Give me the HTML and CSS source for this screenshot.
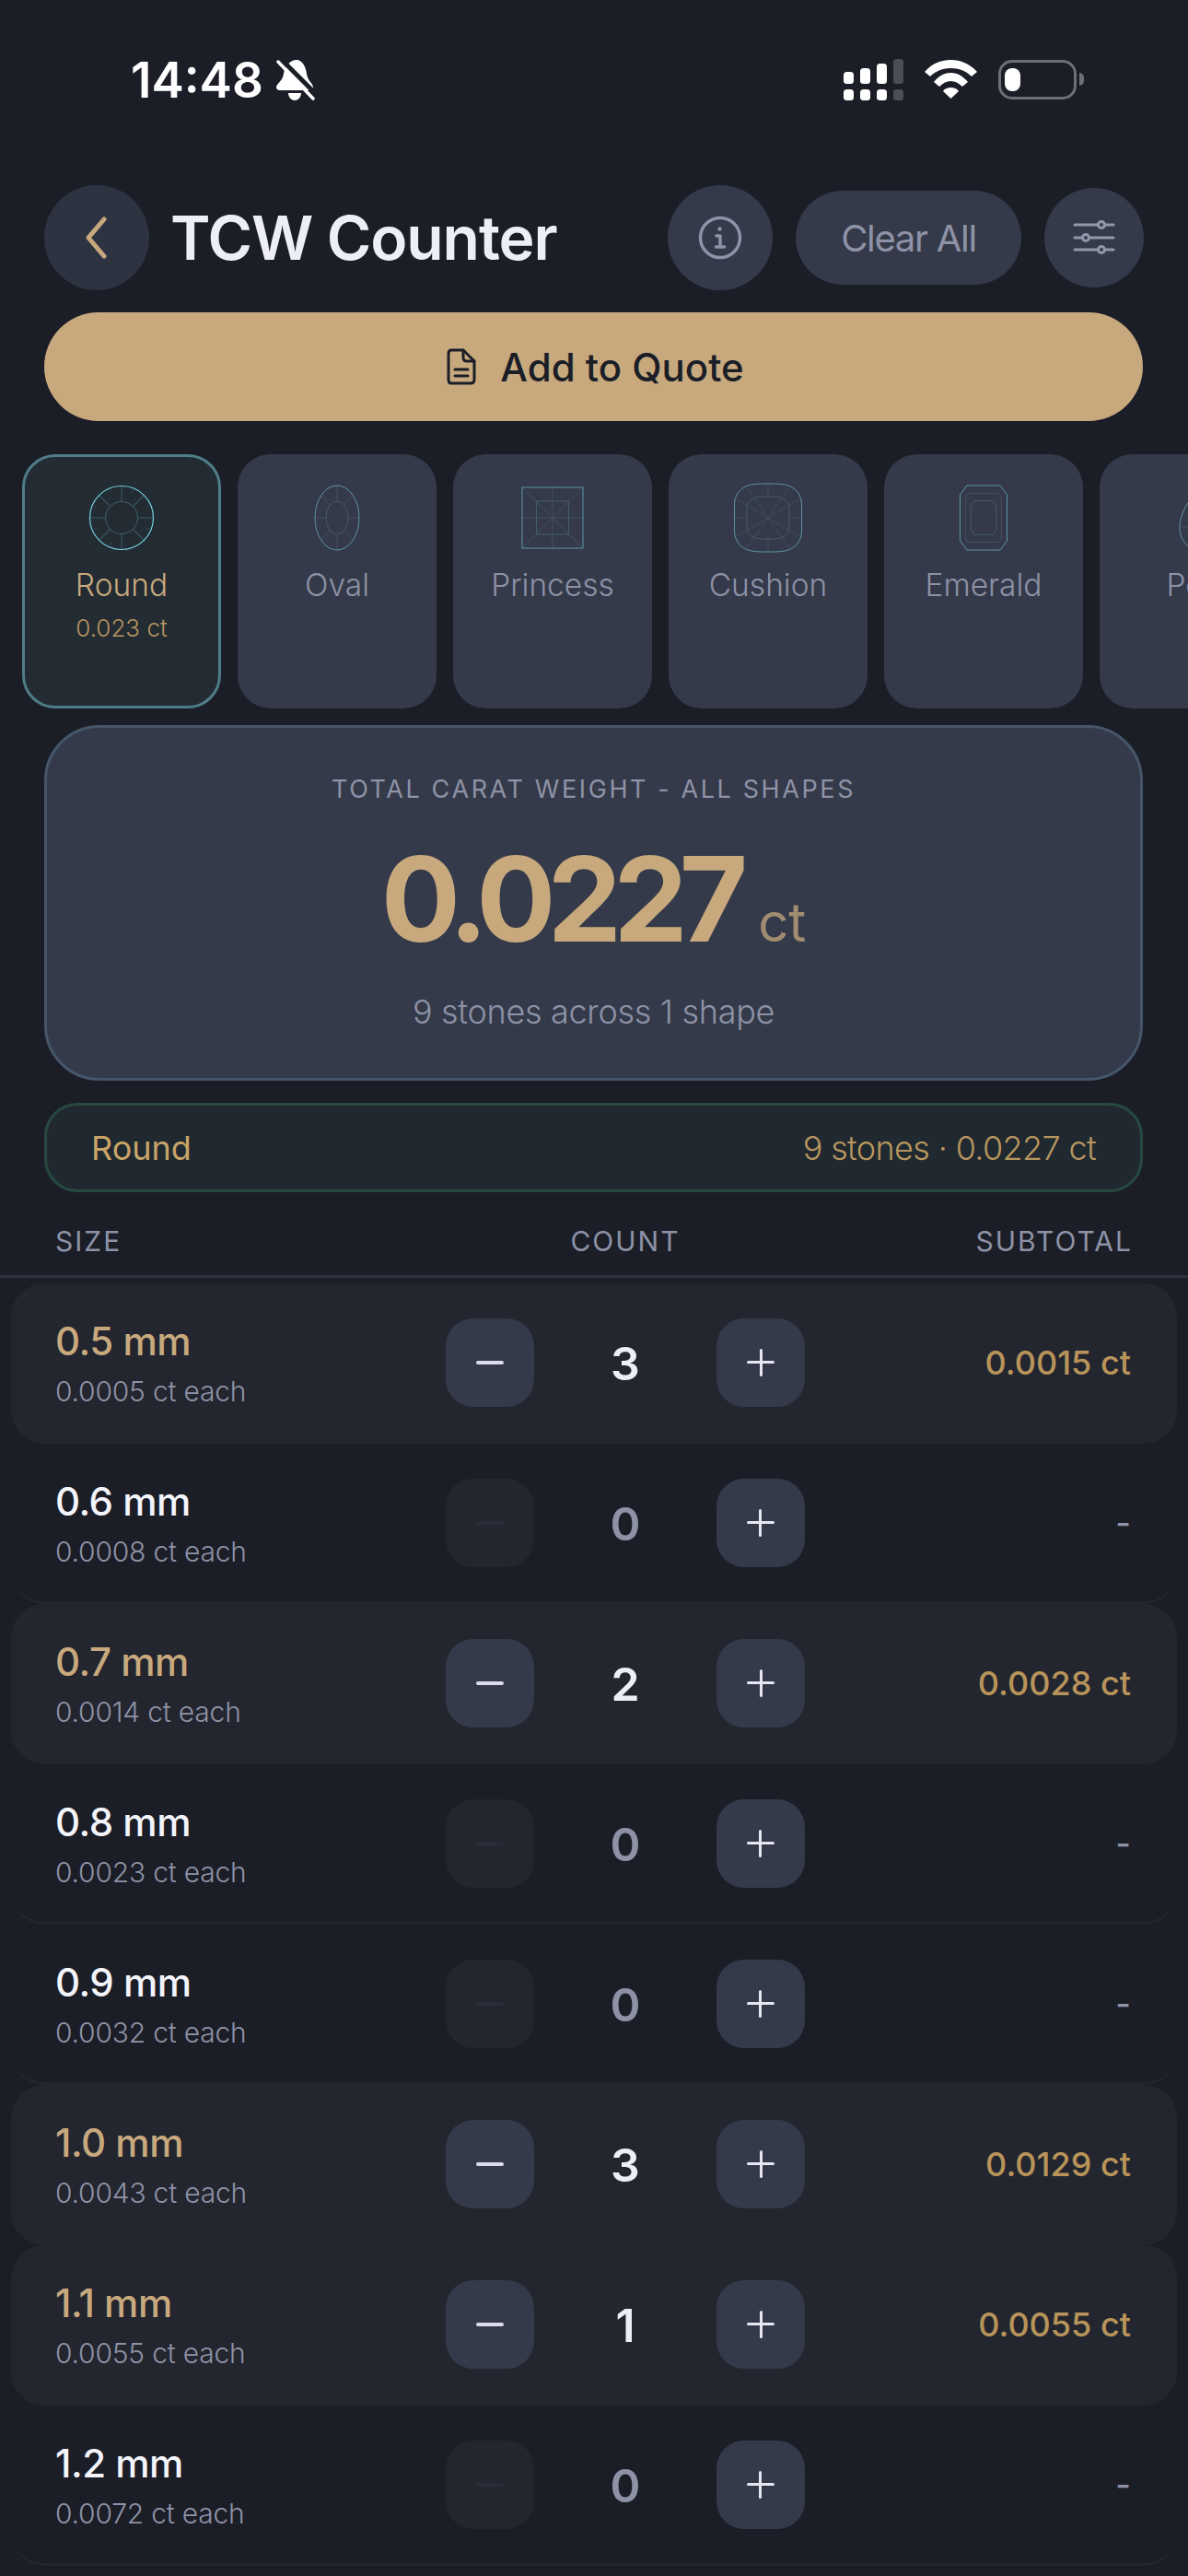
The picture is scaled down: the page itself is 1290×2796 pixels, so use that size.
FILE: index.html
```html
<!DOCTYPE html>
<html lang="en">
<head>
  <meta charset="UTF-8" />
  <title>TCW Counter</title>
  <link rel="stylesheet" href="styles.css">
</head>

<body>
  <div class="screen">

    <div class="status-bar">
      <div class="status-left">
        <span class="status-time">14:48</span>
        <svg class="icon-bell" width="42" height="46" viewBox="0 0 42 46">
          <path d="M22 1C28 1 32 8 33 16C34 24 40 26 40 31C40 33 38 34 36 34H4C2 34 0 33 0 31C0 27 7 24 8 16C9 8 15 1 22 1Z" fill="#fff"/>
          <path d="M13 37H27C27 42 23 45 20 45C17 45 13 42 13 37Z" fill="#fff"/>
          <path d="M5 0L43 38" stroke="#1b1e27" stroke-width="5"/>
          <path d="M2 3L40 43" stroke="#fff" stroke-width="3.5" stroke-linecap="round"/>
        </svg>
      </div>
      <div class="status-right">
        <svg width="65" height="45" viewBox="0 0 65 45" fill="#fff">
          <rect x="0" y="14" width="11" height="13" rx="3.5"/>
          <rect x="18" y="10" width="11" height="17" rx="3.5"/>
          <rect x="36" y="5" width="11" height="22" rx="3.5"/>
          <rect x="54" y="0" width="11" height="27" rx="3.5" fill="#4b4e57"/>
          <rect x="0" y="33" width="11" height="12" rx="3.5"/>
          <rect x="18" y="33" width="11" height="12" rx="3.5"/>
          <rect x="36" y="33" width="11" height="12" rx="3.5"/>
          <rect x="54" y="33" width="11" height="12" rx="3.5" fill="#4b4e57"/>
        </svg>
        <svg class="icon-wifi" width="57" height="42" viewBox="0 0 57 42" fill="#fff">
          <path d="M0 13C8 4 18 0 28.5 0C39 0 49 4 57 13L51 18C45 12 37 9 28.5 9C20 9 12 12 6 18Z"/>
          <path d="M10 24C15 18 21 14 28.5 14C36 14 42 18 47 24L41 29C37 25 33 23 28.5 23C24 23 20 25 16 29Z"/>
          <path d="M20 34C22 31 25 30 28.5 30C32 30 35 31 37 34L28.5 42Z"/>
        </svg>
        <div class="battery"><div class="battery-level"></div></div>
        <div class="battery-nub"></div>
      </div>
    </div>

    <div class="top-bar">
      <button class="round-btn back-btn">
        <svg width="28" height="46" viewBox="0 0 28 46" fill="none"><path d="M23 3L6 23L23 43" stroke="#c8a97e" stroke-width="5" stroke-linecap="round" stroke-linejoin="round"/></svg>
      </button>
      <h1 class="page-title">TCW Counter</h1>
      <button class="round-btn info-btn">
        <svg width="48" height="48" viewBox="0 0 48 48" fill="none" stroke="#8e92a6" stroke-width="3.5" stroke-linecap="round" stroke-linejoin="round">
          <circle cx="24" cy="24" r="21.5"/>
          <path d="M20 22H24V34M19.5 34H28.5"/>
          <circle cx="23.5" cy="14.5" r="2.2" fill="#8e92a6" stroke="none"/>
        </svg>
      </button>
      <button class="clear-btn">Clear All</button>
      <button class="round-btn filter-btn">
        <svg width="46" height="40" viewBox="0 0 46 40" fill="none" stroke="#9397aa" stroke-width="3" stroke-linecap="round">
          <path d="M2 6H44M2 20H44M2 33H44"/>
          <circle cx="31" cy="6" r="3.500" fill="#353a4a"/>
          <circle cx="14" cy="20" r="3.500" fill="#353a4a"/>
          <circle cx="31" cy="33" r="3.500" fill="#353a4a"/>
        </svg>
      </button>
    </div>

    <button class="quote-btn">
      <svg width="32" height="40" viewBox="0 0 32 40" fill="none" stroke="#1b1e27" stroke-width="3" stroke-linecap="round" stroke-linejoin="round">
        <path d="M5 2H18L30 14V34C30 36.500 28.500 38 26 38H5C3 38 2 36.500 2 34V6C2 3.500 3 2 5 2Z"/>
        <path d="M18 2V10C18 12.500 19.500 14 22 14H30"/>
        <path d="M9 23H23M9 30H23"/>
      </svg>
      Add to Quote
    </button>

    <div class="shape-strip">
      <div class="shape-card selected">
        <svg class="shape-icon" width="80" height="80" viewBox="0 0 80 80" fill="none">
          <g stroke="#344c57" stroke-width="1.500">
            <path d="M40 5.500V22.500M40 57.500V74.500M5.500 40H22.500M57.500 40H74.500M15.600 15.600L27.600 27.600M64.400 15.600L52.400 27.600M15.600 64.400L27.600 52.400M64.400 64.400L52.400 52.400"/>
            <path d="M66.800 28.900L70.500 27.400M13.200 28.900L9.500 27.400M66.800 51.100L70.500 52.600M13.200 51.100L9.500 52.600M28.900 13.200L27.400 9.500M51.100 13.200L52.600 9.500M28.900 66.800L27.400 70.500M51.100 66.800L52.600 70.500" stroke-width=".8"/>
          </g>
          <circle cx="40" cy="40" r="17.500" stroke="#3f636e" stroke-width="1"/>
          <circle cx="40" cy="40" r="34.500" stroke="#74d3df" stroke-width="1.200"/>
        </svg>
        <div class="shape-name">Round</div>
        <div class="shape-weight">0.023 ct</div>
      </div>

      <div class="shape-card">
        <svg class="shape-icon" width="80" height="80" viewBox="0 0 80 80" fill="none">
          <g stroke="#424f5e" stroke-width="1">
            <path d="M40 5V22M40 58V75M16 40H28M52 40H64M23 16L33 27M57 16L47 27M23 64L33 53M57 64L47 53"/>
          </g>
          <ellipse cx="40" cy="40" rx="12" ry="18" stroke="#445d6b" stroke-width=".9"/>
          <ellipse cx="40" cy="40" rx="24" ry="35" stroke="#5b95a3" stroke-width="1"/>
        </svg>
        <div class="shape-name">Oval</div>
      </div>

      <div class="shape-card">
        <svg class="shape-icon" width="80" height="80" viewBox="0 0 80 80" fill="none">
          <path d="M7 7L73 73M73 7L7 73M40 7V73M7 40H73" stroke="#414e5d" stroke-width="1"/>
          <rect x="22.500" y="22" width="35" height="36" stroke="#445d6b" stroke-width="1"/>
          <rect x="7" y="7" width="66" height="66" stroke="#5b95a3" stroke-width="1"/>
        </svg>
        <div class="shape-name">Princess</div>
      </div>

      <div class="shape-card">
        <svg class="shape-icon" width="80" height="80" viewBox="0 0 80 80" fill="none">
          <path d="M40 3V17M40 63V77M3 40H17M63 40H77M18 8L62 72M62 8L18 72M6 20L74 60M74 20L6 60" stroke="#424f5e" stroke-width=".9"/>
          <path d="M40 17C46 17 52 17 55 19C60 21 63 25 63 30C63 36 63 44 63 50C63 55 60 59 55 61C52 63 46 63 40 63C34 63 28 63 25 61C20 59 17 55 17 50C17 44 17 36 17 30C17 25 20 21 25 19C28 17 34 17 40 17Z" stroke="#445d6b" stroke-width="1"/>
          <path d="M40 3C50 3 60 3 66 7C73 11 76.500 18 76.500 26C76.500 35 76.500 45 76.500 54C76.500 62 73 69 66 73C60 77 50 77 40 77C30 77 20 77 14 73C7 69 3.500 62 3.500 54C3.500 45 3.500 35 3.500 26C3.500 18 7 11 14 7C20 3 30 3 40 3Z" stroke="#5b95a3" stroke-width="1"/>
        </svg>
        <div class="shape-name">Cushion</div>
      </div>

      <div class="shape-card">
        <svg class="shape-icon" width="80" height="80" viewBox="0 0 80 80" fill="none">
          <path d="M23 13.500H57L59.500 18V62L57 66.500H23L20.500 62V18Z" stroke="#454f5d" stroke-width=".9"/>
          <path d="M30 21.500H50L54 28V52L50 58.500H30L26 52V28Z" stroke="#445d6b" stroke-width=".9"/>
          <path d="M22 5H58L65.500 15V65L58 75H22L14.500 65V15Z" stroke="#5b95a3" stroke-width="1"/>
        </svg>
        <div class="shape-name">Emerald</div>
      </div>

      <div class="shape-card">
        <svg class="shape-icon" width="80" height="80" viewBox="0 0 80 80" fill="none">
          <path d="M40 5C46 16 61 32 61 50C61 65 51 75 40 75C29 75 19 65 19 50C19 32 34 16 40 5Z" stroke="#5b95a3" stroke-width="1"/>
          <path d="M19 50H34M46 50H61" stroke="#424f5e" stroke-width="1"/>
        </svg>
        <div class="shape-name">Pear</div>
      </div>
    </div>

    <div class="total-card">
      <div class="total-label">TOTAL CARAT WEIGHT - ALL SHAPES</div>
      <div class="total-value"><span class="total-number">0.0227</span><span class="total-unit">ct</span></div>
      <div class="total-note">9 stones across 1 shape</div>
    </div>

    <div class="group-row">
      <span>Round</span>
      <span class="group-summary">9 stones · 0.0227 ct</span>
    </div>

    <div class="table-head">
      <span>SIZE</span>
      <span class="head-count">COUNT</span>
      <span class="head-subtotal">SUBTOTAL</span>
    </div>

    <div class="size-row active">
      <div class="size-cell"><div class="size-mm">0.5 mm</div><div class="size-each">0.0005 ct each</div></div>
      <div class="stepper">
        <button class="step-btn minus"><span class="minus-bar"></span></button>
        <span class="count">3</span>
        <button class="step-btn plus"><span class="plus-bar"></span></button>
      </div>
      <div class="subtotal">0.0015 ct</div>
    </div>

    <div class="size-row">
      <div class="size-cell"><div class="size-mm">0.6 mm</div><div class="size-each">0.0008 ct each</div></div>
      <div class="stepper">
        <button class="step-btn minus" disabled><span class="minus-bar"></span></button>
        <span class="count">0</span>
        <button class="step-btn plus"><span class="plus-bar"></span></button>
      </div>
      <div class="subtotal">-</div>
    </div>

    <div class="size-row active">
      <div class="size-cell"><div class="size-mm">0.7 mm</div><div class="size-each">0.0014 ct each</div></div>
      <div class="stepper">
        <button class="step-btn minus"><span class="minus-bar"></span></button>
        <span class="count">2</span>
        <button class="step-btn plus"><span class="plus-bar"></span></button>
      </div>
      <div class="subtotal">0.0028 ct</div>
    </div>

    <div class="size-row">
      <div class="size-cell"><div class="size-mm">0.8 mm</div><div class="size-each">0.0023 ct each</div></div>
      <div class="stepper">
        <button class="step-btn minus" disabled><span class="minus-bar"></span></button>
        <span class="count">0</span>
        <button class="step-btn plus"><span class="plus-bar"></span></button>
      </div>
      <div class="subtotal">-</div>
    </div>

    <div class="size-row">
      <div class="size-cell"><div class="size-mm">0.9 mm</div><div class="size-each">0.0032 ct each</div></div>
      <div class="stepper">
        <button class="step-btn minus" disabled><span class="minus-bar"></span></button>
        <span class="count">0</span>
        <button class="step-btn plus"><span class="plus-bar"></span></button>
      </div>
      <div class="subtotal">-</div>
    </div>

    <div class="size-row active">
      <div class="size-cell"><div class="size-mm">1.0 mm</div><div class="size-each">0.0043 ct each</div></div>
      <div class="stepper">
        <button class="step-btn minus"><span class="minus-bar"></span></button>
        <span class="count">3</span>
        <button class="step-btn plus"><span class="plus-bar"></span></button>
      </div>
      <div class="subtotal">0.0129 ct</div>
    </div>

    <div class="size-row active">
      <div class="size-cell"><div class="size-mm">1.1 mm</div><div class="size-each">0.0055 ct each</div></div>
      <div class="stepper">
        <button class="step-btn minus"><span class="minus-bar"></span></button>
        <span class="count">1</span>
        <button class="step-btn plus"><span class="plus-bar"></span></button>
      </div>
      <div class="subtotal">0.0055 ct</div>
    </div>

    <div class="size-row">
      <div class="size-cell"><div class="size-mm">1.2 mm</div><div class="size-each">0.0072 ct each</div></div>
      <div class="stepper">
        <button class="step-btn minus" disabled><span class="minus-bar"></span></button>
        <span class="count">0</span>
        <button class="step-btn plus"><span class="plus-bar"></span></button>
      </div>
      <div class="subtotal">-</div>
    </div>

  </div>
</body>
</html>
```

FILE: styles.css
```css
* {
  box-sizing: border-box;
}

body {
  margin: 0;
  background: #1b1e27;
  font-family: 'Inter', sans-serif;
  color: #eeeef8;
}

button {
  font-family: inherit;
  border: none;
  padding: 0;
}

.screen {
  width: 1290px;
  height: 2796px;
  overflow: hidden;
}

/* status bar */
.status-bar {
  height: 201px;
  padding: 64px 113px 0 142px;
  display: flex;
  justify-content: space-between;
  align-items: flex-start;
}

.status-left {
  display: flex;
  align-items: center;
  gap: 14px;
}

.status-time {
  font-size: 53px;
  line-height: 46px;
  font-weight: 600;
  color: #fff;
}

.status-right {
  display: flex;
  align-items: flex-start;
}

.icon-wifi {
  margin-left: 23px;
  margin-top: 1px;
}

.battery {
  width: 85px;
  height: 43px;
  margin-left: 23px;
  margin-top: 1px;
  padding: 6px 4px;
  border: 3px solid #6e6f76;
  border-radius: 15px;
}

.battery-level {
  width: 17px;
  height: 25px;
  background: #fff;
  border-radius: 8px;
}

.battery-nub {
  width: 5px;
  height: 14px;
  margin-left: 3px;
  margin-top: 15px;
  background: #6e6f76;
  border-radius: 0 6px 6px 0;
}

/* header */
.top-bar {
  display: flex;
  align-items: center;
  padding: 0 48px;
}

.round-btn {
  display: flex;
  align-items: center;
  justify-content: center;
  flex-shrink: 0;
  border-radius: 50%;
  background: #353a4a;
}

.back-btn {
  width: 114px;
  height: 114px;
  background: #2e3341;
  padding-right: 3px;
}

.info-btn {
  width: 114px;
  height: 114px;
  margin-left: auto;
}

.filter-btn {
  width: 108px;
  height: 108px;
  margin-left: 25px;
}

.page-title {
  margin: 0 0 0 23px;
  font-size: 66px;
  font-weight: 600;
  letter-spacing: -1.100px;
  color: #eeeef8;
}

.clear-btn {
  width: 245px;
  height: 102px;
  margin-left: 25px;
  border-radius: 51px;
  background: #353a4a;
  color: #8e92a6;
  font-size: 40px;
  letter-spacing: -1.300px;
}

.quote-btn {
  display: flex;
  align-items: center;
  justify-content: center;
  gap: 26px;
  width: 1193px;
  height: 118px;
  margin: 24px 0 0 48px;
  padding-left: 4px;
  border-radius: 59px;
  background: #c8a97e;
  color: #1b1e27;
  font-size: 42px;
  font-weight: 500;
}

/* shape picker */
.shape-strip {
  display: flex;
  gap: 18px;
  margin-top: 36px;
  padding-left: 24px;
  overflow: hidden;
}

.shape-card {
  flex: 0 0 216px;
  height: 276px;
  padding-top: 26px;
  border: 3px solid transparent;
  border-radius: 36px;
  background: #353a4a;
  text-align: center;
  color: #8e92a6;
}

.shape-card.selected {
  background: #232b33;
  border-color: #4f7d87;
}

.shape-icon {
  display: block;
  margin: 0 auto;
}

.shape-name {
  margin-top: 11px;
  font-size: 33.500px;
  line-height: 44px;
  font-weight: 300;
}

.selected .shape-name {
  color: #c8a97e;
}

.shape-weight {
  margin-top: 7px;
  font-size: 26px;
  line-height: 36px;
  font-weight: 300;
  color: #b8965f;
}

/* totals */
.total-card {
  width: 1193px;
  height: 386px;
  margin: 18px 0 0 48px;
  padding-top: 50px;
  border: 3px solid #46566a;
  border-radius: 60px;
  background: #353a4a;
  text-align: center;
}

.total-label {
  font-size: 27px;
  line-height: 34px;
  letter-spacing: 2.600px;
  color: #8e92a6;
}

.total-value {
  margin-top: 44px;
  line-height: 116px;
}

.total-number {
  font-size: 128px;
  font-weight: 700;
  letter-spacing: -9px;
  color: #c8a97e;
}

.total-unit {
  margin-left: 20px;
  font-size: 58px;
  color: #a08c70;
}

.total-note {
  margin-top: 1px;
  font-size: 36px;
  font-weight: 300;
  line-height: 46px;
  letter-spacing: -0.300px;
  color: #8e92a6;
}

.group-row {
  display: flex;
  justify-content: space-between;
  align-items: center;
  width: 1193px;
  height: 97px;
  margin: 24px 0 0 48px;
  padding: 0 48px;
  border: 3px solid #28493f;
  border-radius: 36px;
  background: #20292f;
  color: #c8a468;
  font-size: 36px;
}

.group-summary {
  font-weight: 300;
  letter-spacing: -0.650px;
  color: #b8965f;
}

/* size table */
.table-head {
  display: grid;
  grid-template-columns: 424px 390px 356px;
  height: 93px;
  padding: 36px 0 0 60px;
  border-bottom: 3px solid #2e323d;
  font-size: 30px;
  line-height: 34px;
  letter-spacing: 2px;
  color: #8e92a6;
}

.head-count {
  text-align: center;
}

.head-subtotal {
  text-align: right;
}

.size-row {
  display: grid;
  grid-template-columns: 424px 390px 354px;
  align-items: center;
  height: 174px;
  padding-left: 48px;
  border-bottom: 3px solid #23262f;
  border-radius: 36px;
  width: 1266px;
  margin-left: 12px;
}

.table-head + .size-row {
  margin-top: 6px;
}

.size-row.active {
  background: #23262f;
}

.size-cell {
  padding-top: 2px;
}

.size-mm {
  font-size: 42px;
  line-height: 52px;
  font-weight: 500;
  letter-spacing: -0.500px;
  color: #f4f4fb;
}

.active .size-mm {
  color: #c8a97e;
}

.size-each {
  margin-top: 9px;
  font-size: 30px;
  font-weight: 300;
  line-height: 38px;
  letter-spacing: -0.200px;
  color: #8e92a6;
}

.stepper {
  display: flex;
  align-items: center;
  justify-content: space-between;
}

.step-btn {
  display: flex;
  align-items: center;
  justify-content: center;
  width: 96px;
  height: 96px;
  border-radius: 30px;
  background: #353a4a;
}

.step-btn:disabled {
  background: #23262f;
}

.minus-bar {
  display: block;
  width: 30px;
  height: 4px;
  background: #dcdde8;
  border-radius: 2px;
}

.step-btn:disabled .minus-bar {
  background: #2a2d37;
}

.plus-bar {
  position: relative;
  display: block;
  width: 30px;
  height: 3px;
  background: #e6e7f0;
  border-radius: 2px;
}

.plus-bar::after {
  content: "";
  position: absolute;
  left: 13.500px;
  top: -13.500px;
  width: 3px;
  height: 30px;
  background: #e6e7f0;
  border-radius: 2px;
}

.count {
  padding-top: 3px;
  font-size: 50px;
  font-weight: 600;
  color: #eeeef8;
}

.size-row:not(.active) .count {
  color: #8e92a6;
}

.subtotal {
  text-align: right;
  font-size: 36px;
  font-weight: 450;
  color: #b8945a;
}

.size-row:not(.active) .subtotal {
  color: #8e92a6;
}
```
